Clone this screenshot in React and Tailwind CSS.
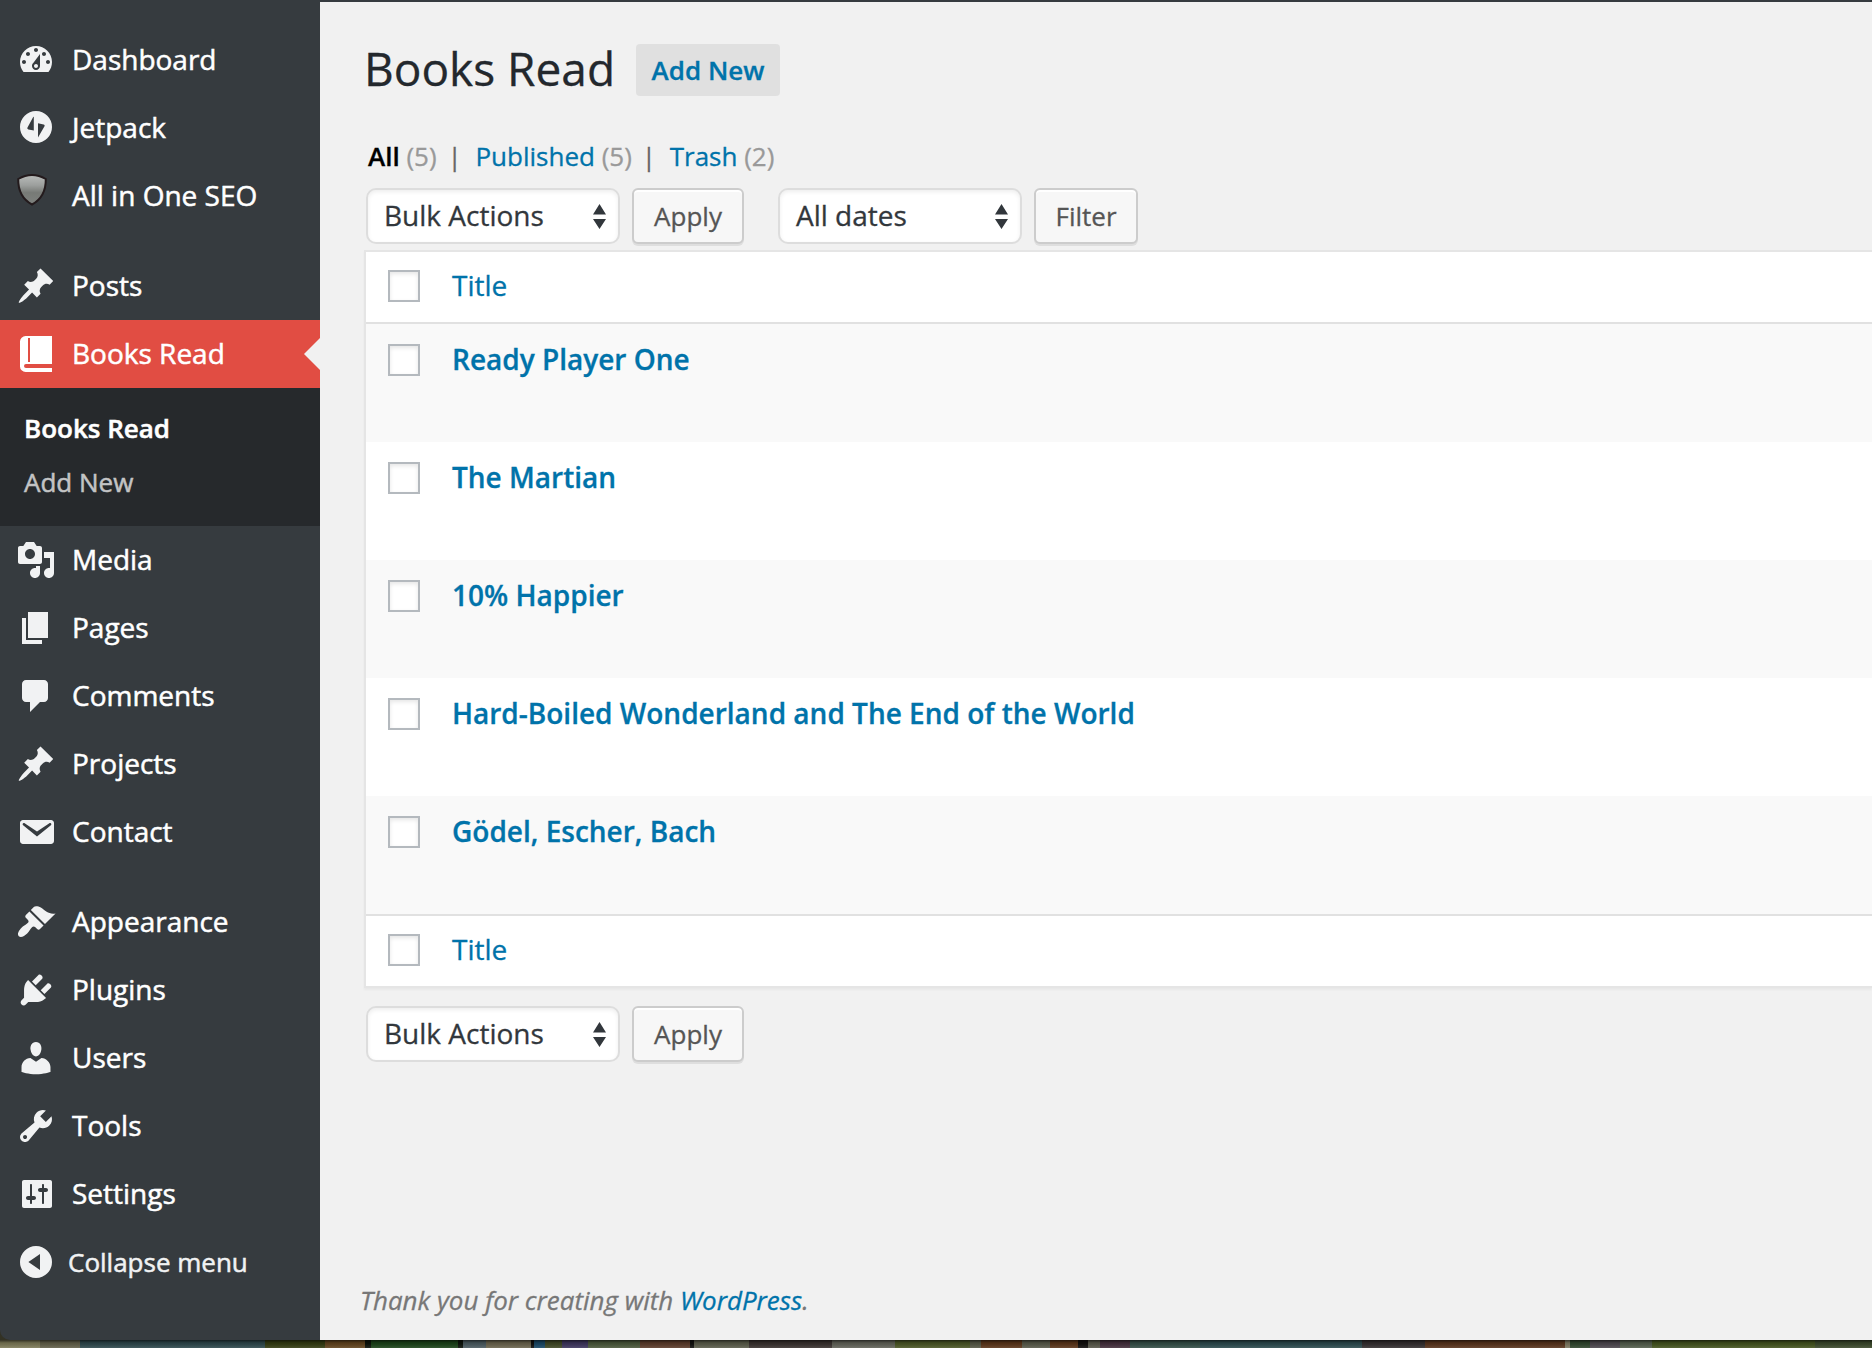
import React from "react";

const icons = {
  dashboard: "M3.76 16h12.48c1.1-1.37 1.76-3.11 1.76-5 0-4.42-3.58-8-8-8s-8 3.58-8 8c0 1.89.66 3.63 1.76 5zM10 4c.55 0 1 .45 1 1s-.45 1-1 1-1-.45-1-1 .45-1 1-1zM6 6c.55 0 1 .45 1 1s-.45 1-1 1-1-.45-1-1 .45-1 1-1zm8 0c.55 0 1 .45 1 1s-.45 1-1 1-1-.45-1-1 .45-1 1-1zm-5.37 5.55L12 7v6c0 1.1-.9 2-2 2s-2-.9-2-2c0-.57.24-1.08.63-1.45zM4 10c.55 0 1 .45 1 1s-.45 1-1 1-1-.45-1-1 .45-1 1-1zm12 0c.55 0 1 .45 1 1s-.45 1-1 1-1-.45-1-1 .45-1 1-1zm-5 3c0-.55-.45-1-1-1s-1 .45-1 1 .45 1 1 1 1-.45 1-1z",
  jetpack: "M10 1.5a8 8 0 1 0 0 16a8 8 0 0 0 0-16zM8.600 4.500c.15-.3.3-.2.3.1V11.3L6.200 10.700c-.5-.1-.65-.4-.45-.9zM11 7.600l2.800.6c.5.1.65.5.45.9L11 14.800z",
  pin: "M10.44 3.02l1.82-1.82 6.36 6.35-1.83 1.82c-1.05-.68-2.48-.57-3.41.36l-.75.75c-.92.93-1.04 2.35-.35 3.41l-1.83 1.82-2.41-2.41-2.8 2.79c-.42.42-3.38 2.71-3.8 2.29s1.86-3.39 2.28-3.81l2.79-2.79L4.1 9.36l1.83-1.82c1.05.69 2.48.57 3.4-.36l.75-.75c.93-.92 1.05-2.35.36-3.41z",
  book: "M4.8 1H18v14H5a1 1 0 0 0 0 2h13v2H4.8A2.8 2.8 0 0 1 2 16.2V3.8A2.8 2.8 0 0 1 4.8 1zM6 2v12h1V2z",
  media: "M13 11V4c0-.55-.45-1-1-1h-1.67L9 1H5L3.67 3H2c-.55 0-1 .45-1 1v7c0 .55.45 1 1 1h10c.55 0 1-.45 1-1zM7 4.5c1.38 0 2.5 1.12 2.5 2.5S8.38 9.5 7 9.5 4.5 8.38 4.5 7 5.62 4.5 7 4.5zM14 6h5v10.5c0 1.38-1.12 2.5-2.5 2.5S14 17.88 14 16.5s1.12-2.5 2.5-2.5c.17 0 .34.02.5.05V9h-3V6zm-4 8.05V13h2v3.5c0 1.38-1.12 2.5-2.5 2.5S7 17.88 7 16.5 8.12 14 9.5 14c.17 0 .34.02.5.05z",
  page: "M6 15V2h10v13H6zm-1 1h8v2H3V5h2v11z",
  comment: "M5 2h9c1.1 0 2 .9 2 2v7c0 1.1-.9 2-2 2h-2l-5 5v-5H5c-1.1 0-2-.9-2-2V4c0-1.1.9-2 2-2z",
  mail: "M3.5 4h14c.83 0 1.5.67 1.5 1.5v9c0 .83-.67 1.5-1.5 1.5h-14c-.83 0-1.5-.67-1.5-1.5v-9C2 4.67 2.67 4 3.5 4zM10.5 12.200l6.800-5.400c.9-.8.1-1.800-.8-1.100l-6 4-6-4c-.9-.7-1.700.3-.8 1.100z",
  brush: "M14.48 11.06L7.41 3.99l1.5-1.5c.5-.56 2.3-.47 3.51.32 1.21.8 1.43 1.28 2.91 2.1 1.18.64 2.45 1.26 4.45.85zm-.71.71L6.7 4.7 4.93 6.47c-.39.39-.39 1.02 0 1.41l1.06 1.06c.39.39.39 1.03 0 1.42-.6.6-1.43 1.11-2.21 1.69-.35.26-.7.53-1.01.84C1.43 14.23.4 16.08 1.4 17.07c.99 1 2.84-.03 4.18-1.36.31-.31.58-.66.85-1.02.57-.78 1.08-1.61 1.69-2.21.39-.39 1.02-.39 1.41 0l1.06 1.06c.39.39 1.02.39 1.41 0z",
  plug: "M13.11 4.36L9.87 7.6 8 5.73l3.24-3.24c.35-.34 1.05-.2 1.56.32.52.51.66 1.21.31 1.55zm-8 1.77l.91-1.12 9.01 9.01-1.19.84c-.71.71-2.63 1.16-3.82 1.16H6.14L4.9 17.26c-.59.59-1.54.59-2.12 0-.59-.58-.59-1.53 0-2.12l1.24-1.24v-3.88c0-1.13.4-3.19 1.09-3.89zm7.26 3.97l3.24-3.24c.34-.35 1.04-.21 1.55.31.52.51.66 1.21.31 1.55l-3.24 3.25z",
  user: "M10 9.25c-2.27 0-2.73-3.44-2.73-3.44C7 4.02 7.82 2 9.97 2c2.16 0 2.98 2.02 2.71 3.81 0 0-.41 3.44-2.68 3.44zm0 2.57L12.72 10c2.39 0 4.52 2.33 4.52 4.53v2.49s-3.65 1.13-7.24 1.13c-3.65 0-7.24-1.13-7.24-1.13v-2.49c0-2.25 1.94-4.48 4.47-4.48z",
  wrench: "M16.68 9.77c-1.34 1.34-3.3 1.67-4.95.99l-5.41 6.52c-.99.99-2.59.99-3.58 0s-.99-2.59 0-3.57l6.52-5.42c-.68-1.65-.35-3.61.99-4.95 1.28-1.28 3.12-1.62 4.72-1.06l-2.89 2.89 2.82 2.82 2.86-2.87c.53 1.58.18 3.39-1.08 4.65zM3.81 16.21c.4.39 1.04.39 1.43 0 .4-.4.4-1.04 0-1.43-.39-.4-1.03-.4-1.43 0-.39.39-.39 1.03 0 1.43z",
  settings: "M18 16V4c0-.55-.45-1-1-1H4c-.55 0-1 .45-1 1v12c0 .55.45 1 1 1h13c.55 0 1-.45 1-1zM8 11h1c.55 0 1 .45 1 1s-.45 1-1 1H8v1.5c0 .28-.22.5-.5.5s-.5-.22-.5-.5V13H6c-.55 0-1-.45-1-1s.45-1 1-1h1V5.5c0-.28.22-.5.5-.5s.5.22.5.5V11zm5-2h-1c-.55 0-1-.45-1-1s.45-1 1-1h1V5.5c0-.28.22-.5.5-.5s.5.22.5.5V7h1c.55 0 1 .45 1 1s-.45 1-1 1h-1v5.5c0 .28-.22.5-.5.5s-.5-.22-.5-.5V9z",
  collapse: "M10 2a8 8 0 1 0 0 16a8 8 0 0 0 0-16zM12 6v8L6.2 10z",
};

function Icon({ name }) {
  return (
    <svg viewBox="0 0 20 20" className="h-10 w-10 shrink-0" fill="currentColor" fillRule="evenodd">
      <path d={icons[name]} />
    </svg>
  );
}

function Shield() {
  return (
    <svg viewBox="0 0 40 40" className="h-10 w-10 shrink-0 overflow-visible">
      <defs>
        <linearGradient id="shield" x1="0" y1="0" x2="0" y2="1">
          <stop offset="0" stopColor="#b9bcba" />
          <stop offset=".35" stopColor="#9c9f9d" />
          <stop offset=".6" stopColor="#777a76" />
          <stop offset="1" stopColor="#7f827f" />
        </linearGradient>
      </defs>
      <path
        d="M2.200 3Q16 -5 29.800 3Q30 21 16 28.500Q2 21 2.200 3Z"
        fill="url(#shield)"
        stroke="#231a1c"
        strokeWidth="2"
      />
    </svg>
  );
}

function MenuItem({ icon, label, active }) {
  return (
    <a className={active ? "relative flex h-[68px] items-center bg-[#e14d43] pl-4 text-white" : "flex h-[68px] items-center pl-4 text-[#f1f2f3]"}>
      {icon === "shield" ? <Shield /> : <Icon name={icon} />}
      <span className="pb-0.5 pl-4 text-[28px] leading-9 text-white">{label}</span>
      {active && (
        <svg viewBox="0 0 16 32" className="absolute top-[18px] right-0 h-8 w-4" fill="#f1f1f1">
          <path d="M16 0v32L0 16z" />
        </svg>
      )}
    </a>
  );
}

function Sidebar() {
  return (
    <nav className="flex w-80 shrink-0 flex-col bg-[#363b3f] pt-[26px] [-webkit-text-stroke:0.5px]">
      <MenuItem icon="dashboard" label="Dashboard" />
      <MenuItem icon="jetpack" label="Jetpack" />
      <MenuItem icon="shield" label="All in One SEO" />
      <div className="h-[22px]" />
      <MenuItem icon="pin" label="Posts" />
      <MenuItem icon="book" label="Books Read" active />
      <div className="flex h-[138px] flex-col bg-[#26292c] pt-[13px] pl-6 text-[26px]">
        <a className="flex h-[54px] items-center font-semibold text-white">Books Read</a>
        <a className="flex h-[54px] items-center text-[#c3c4c5]">Add New</a>
      </div>
      <MenuItem icon="media" label="Media" />
      <MenuItem icon="page" label="Pages" />
      <MenuItem icon="comment" label="Comments" />
      <MenuItem icon="pin" label="Projects" />
      <MenuItem icon="mail" label="Contact" />
      <div className="h-[22px]" />
      <MenuItem icon="brush" label="Appearance" />
      <MenuItem icon="plug" label="Plugins" />
      <MenuItem icon="user" label="Users" />
      <MenuItem icon="wrench" label="Tools" />
      <MenuItem icon="settings" label="Settings" />
      <a className="flex h-[68px] items-center pl-4 text-[#f1f2f3]">
        <Icon name="collapse" />
        <span className="pl-3 text-[26px]">Collapse menu</span>
      </a>
    </nav>
  );
}

function Select({ label, className }) {
  return (
    <div className={"flex h-14 items-center justify-between rounded-[10px] border-2 border-[#ddd] bg-white pr-3 pl-4 text-[28px] text-[#32373c] shadow-[inset_0_2px_4px_rgba(0,0,0,0.07)] " + className}>
      <span className="pb-0.5">{label}</span>
      <svg viewBox="0 0 13 25" className="h-[25px] w-[13px]" fill="#32373c">
        <path d="M6.500 0L13 10.500H0zM0 15h13L6.500 25z" />
      </svg>
    </div>
  );
}

function Button({ label, className }) {
  return (
    <button className={"flex h-14 items-center justify-center rounded-[6px] border-2 border-[#ccc] bg-[#f7f7f7] text-[26px] text-[#555] shadow-[inset_0_2px_0_#fff,0_2px_0_rgba(0,0,0,0.08)] " + className}>
      {label}
    </button>
  );
}

function Checkbox() {
  return <span className="h-8 w-8 shrink-0 border-2 border-[#b4b9be] bg-white shadow-[inset_0_2px_4px_rgba(0,0,0,0.1)]" />;
}

function TitleRow() {
  return (
    <div className="flex h-[70px] items-start gap-8 bg-white pt-[18px] pl-[22px]">
      <Checkbox />
      <a className="-mt-px text-[28px] leading-8 text-[#0073aa]">Title</a>
    </div>
  );
}

const books = [
  "Ready Player One",
  "The Martian",
  "10% Happier",
  "Hard-Boiled Wonderland and The End of the World",
  "Gödel, Escher, Bach",
];

function Main() {
  return (
    <main className="flex min-w-0 flex-1 flex-col border-t-2 border-[#363b3f] bg-[#f1f1f1] pl-11 [-webkit-text-stroke:0.3px]">
      <div className="mt-[42px] flex h-[52px] items-center gap-[21px]">
        <h1 className="pb-1 text-[46px] leading-none text-[#23282d]">Books Read</h1>
        <a className="flex h-[52px] w-36 items-center justify-center rounded-[4px] bg-[#e0e0e0] text-[26px] font-semibold text-[#0073aa]">
          Add New
        </a>
      </div>
      <div className="mt-[42px] flex h-9 items-center pl-1 text-[26px] whitespace-pre text-[#0073aa]">
        <span className="font-semibold text-black">All</span>
        <span className="text-[#999]"> (5) </span>
        <span className="pr-[7px] pl-1 text-[#666]">|</span>
        <span> Published</span>
        <span className="text-[#999]"> (5) </span>
        <span className="pr-[7px] pl-[3px] text-[#666]">|</span>
        <span> Trash</span>
        <span className="text-[#999]"> (2)</span>
      </div>
      <div className="mt-[14px] flex pl-0.5">
        <Select label="Bulk Actions" className="w-[254px]" />
        <Button label="Apply" className="ml-3 w-28" />
        <Select label="All dates" className="ml-[34px] w-[244px]" />
        <Button label="Filter" className="ml-3 w-[104px]" />
      </div>
      <div className="mt-1.5 border-2 border-r-0 border-[#e5e5e5] shadow-[0_2px_2px_rgba(0,0,0,0.04)]">
        <TitleRow />
        <div className="border-y-2 border-[#e1e1e1]">
          {books.map((title) => (
            <div key={title} className="flex h-[118px] gap-8 bg-white pt-5 pl-[22px] odd:bg-[#f9f9f9]">
              <Checkbox />
              <a className="-mt-px text-[28px] leading-8 font-semibold text-[#0073aa]">{title}</a>
            </div>
          ))}
        </div>
        <TitleRow />
      </div>
      <div className="mt-[18px] flex pl-0.5">
        <Select label="Bulk Actions" className="w-[254px]" />
        <Button label="Apply" className="ml-3 w-28" />
      </div>
      <p className="mt-[220px] -ml-1 text-[25.95px] leading-9 text-[#777] italic">
        Thank you for creating with <a className="text-[#0073aa]">WordPress</a>.
      </p>
    </main>
  );
}

// Desktop wallpaper below the window: [start x, colour]
const wallpaper = [
  [0, "#807d5a"], [40, "#65624b"], [80, "#2f4a4e"], [265, "#353d12"], [325, "#64451f"],
  [365, "#0c120a"], [371, "#1c451a"], [458, "#0c120a"], [463, "#4c5c62"], [486, "#6d664f"],
  [531, "#10100e"], [534, "#1a4a68"], [545, "#414a26"], [562, "#3f3760"], [588, "#4c5a3c"],
  [640, "#5e3d2c"], [690, "#10100e"], [694, "#5c5e4c"], [749, "#3a3230"], [832, "#63645a"],
  [895, "#4c5826"], [970, "#585a49"], [981, "#5d371b"], [1022, "#5a5c4c"], [1050, "#5d371b"],
  [1078, "#12100e"], [1088, "#5a5a4c"], [1100, "#46303e"], [1130, "#355048"], [1200, "#2d4c50"],
  [1362, "#353031"], [1425, "#5a351d"], [1565, "#807a62"], [1570, "#31492f"], [1590, "#4e4850"],
  [1620, "#55604e"], [1652, "#45551f"], [1815, "#3c4a2c"],
];

function Wallpaper() {
  return (
    <div className="-mt-3 flex h-5">
      {wallpaper.map(([x, color], i) => (
        <div
          key={x}
          className="shrink-0 bg-linear-to-b from-black/60 from-60% via-black/15 via-75% to-white/10"
          style={{ width: (wallpaper[i + 1]?.[0] ?? 1872) - x, backgroundColor: color }}
        />
      ))}
    </div>
  );
}

export default function App() {
  return (
    <div className="flex h-[1348px] w-[1872px] flex-col overflow-hidden bg-black font-['Open_Sans',sans-serif]">
      <div className="z-10 flex h-[1340px] shrink-0 overflow-hidden rounded-bl-[10px]">
        <Sidebar />
        <Main />
      </div>
      <Wallpaper />
    </div>
  );
}
